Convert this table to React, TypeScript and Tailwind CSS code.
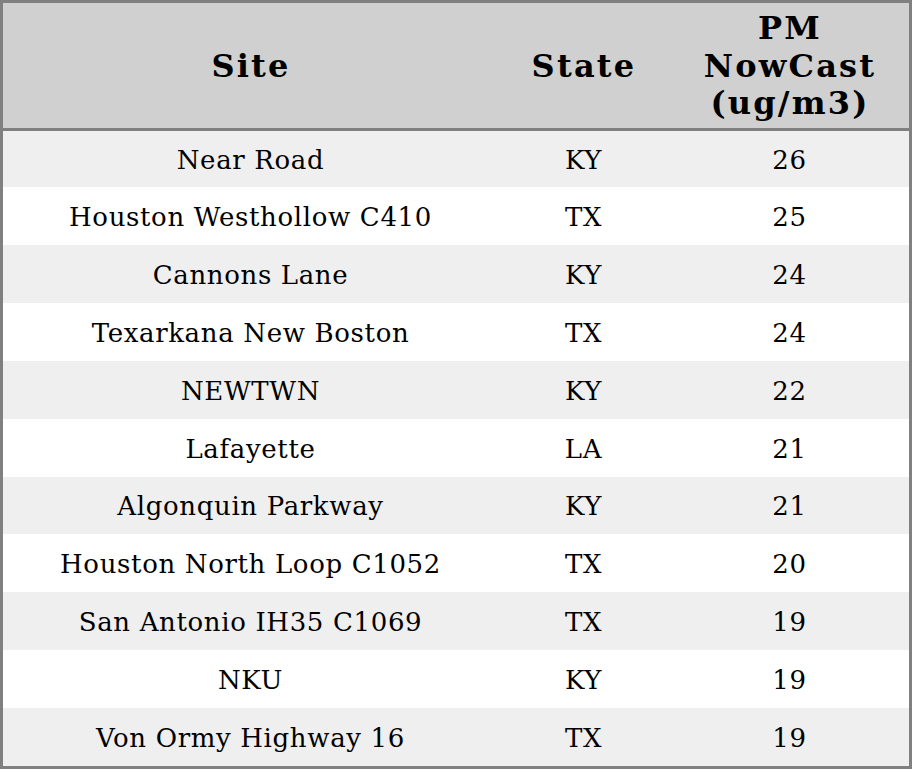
import React from "react";

const rows: [string, string, string][] = [
  ["Near Road", "KY", "26"],
  ["Houston Westhollow C410", "TX", "25"],
  ["Cannons Lane", "KY", "24"],
  ["Texarkana New Boston", "TX", "24"],
  ["NEWTWN", "KY", "22"],
  ["Lafayette", "LA", "21"],
  ["Algonquin Parkway", "KY", "21"],
  ["Houston North Loop C1052", "TX", "20"],
  ["San Antonio IH35 C1069", "TX", "19"],
  ["NKU", "KY", "19"],
  ["Von Ormy Highway 16", "TX", "19"],
];

export default function App() {
  return (
    <div
      className="w-[912px] h-[769px] border-[3px] border-[#808080] flex flex-col text-black"
      style={{ fontFamily: '"DejaVu Serif", serif' }}
    >
      <div className="h-[128px] shrink-0 bg-[#d0d0d0] border-b-[3px] border-[#808080] flex items-center pt-[2px] text-[32px] font-bold leading-[1.17] tracking-[2.2px]">
        <div className="w-[494px] text-center pl-[2px]">Site</div>
        <div className="w-[172px] text-center pl-[2px]">State</div>
        <div className="w-[240px] text-center pl-[2px]">
          PM
          <br />
          NowCast
          <br />
          (ug/m3)
        </div>
      </div>
      {rows.map((r, i) => (
        <div
          key={i}
          className={`${i === 0 ? "h-[56px] shrink-0" : "flex-1"} flex items-center pt-[3px] text-[26px] tracking-[0.65px] ${i % 2 === 0 ? "bg-[#efefef]" : "bg-white"}`}
        >
          <div className="w-[494px] text-center pl-[1px]">{r[0]}</div>
          <div className="w-[172px] text-center pl-[1px]">{r[1]}</div>
          <div className="w-[240px] text-center pl-[1px]">{r[2]}</div>
        </div>
      ))}
    </div>
  );
}
